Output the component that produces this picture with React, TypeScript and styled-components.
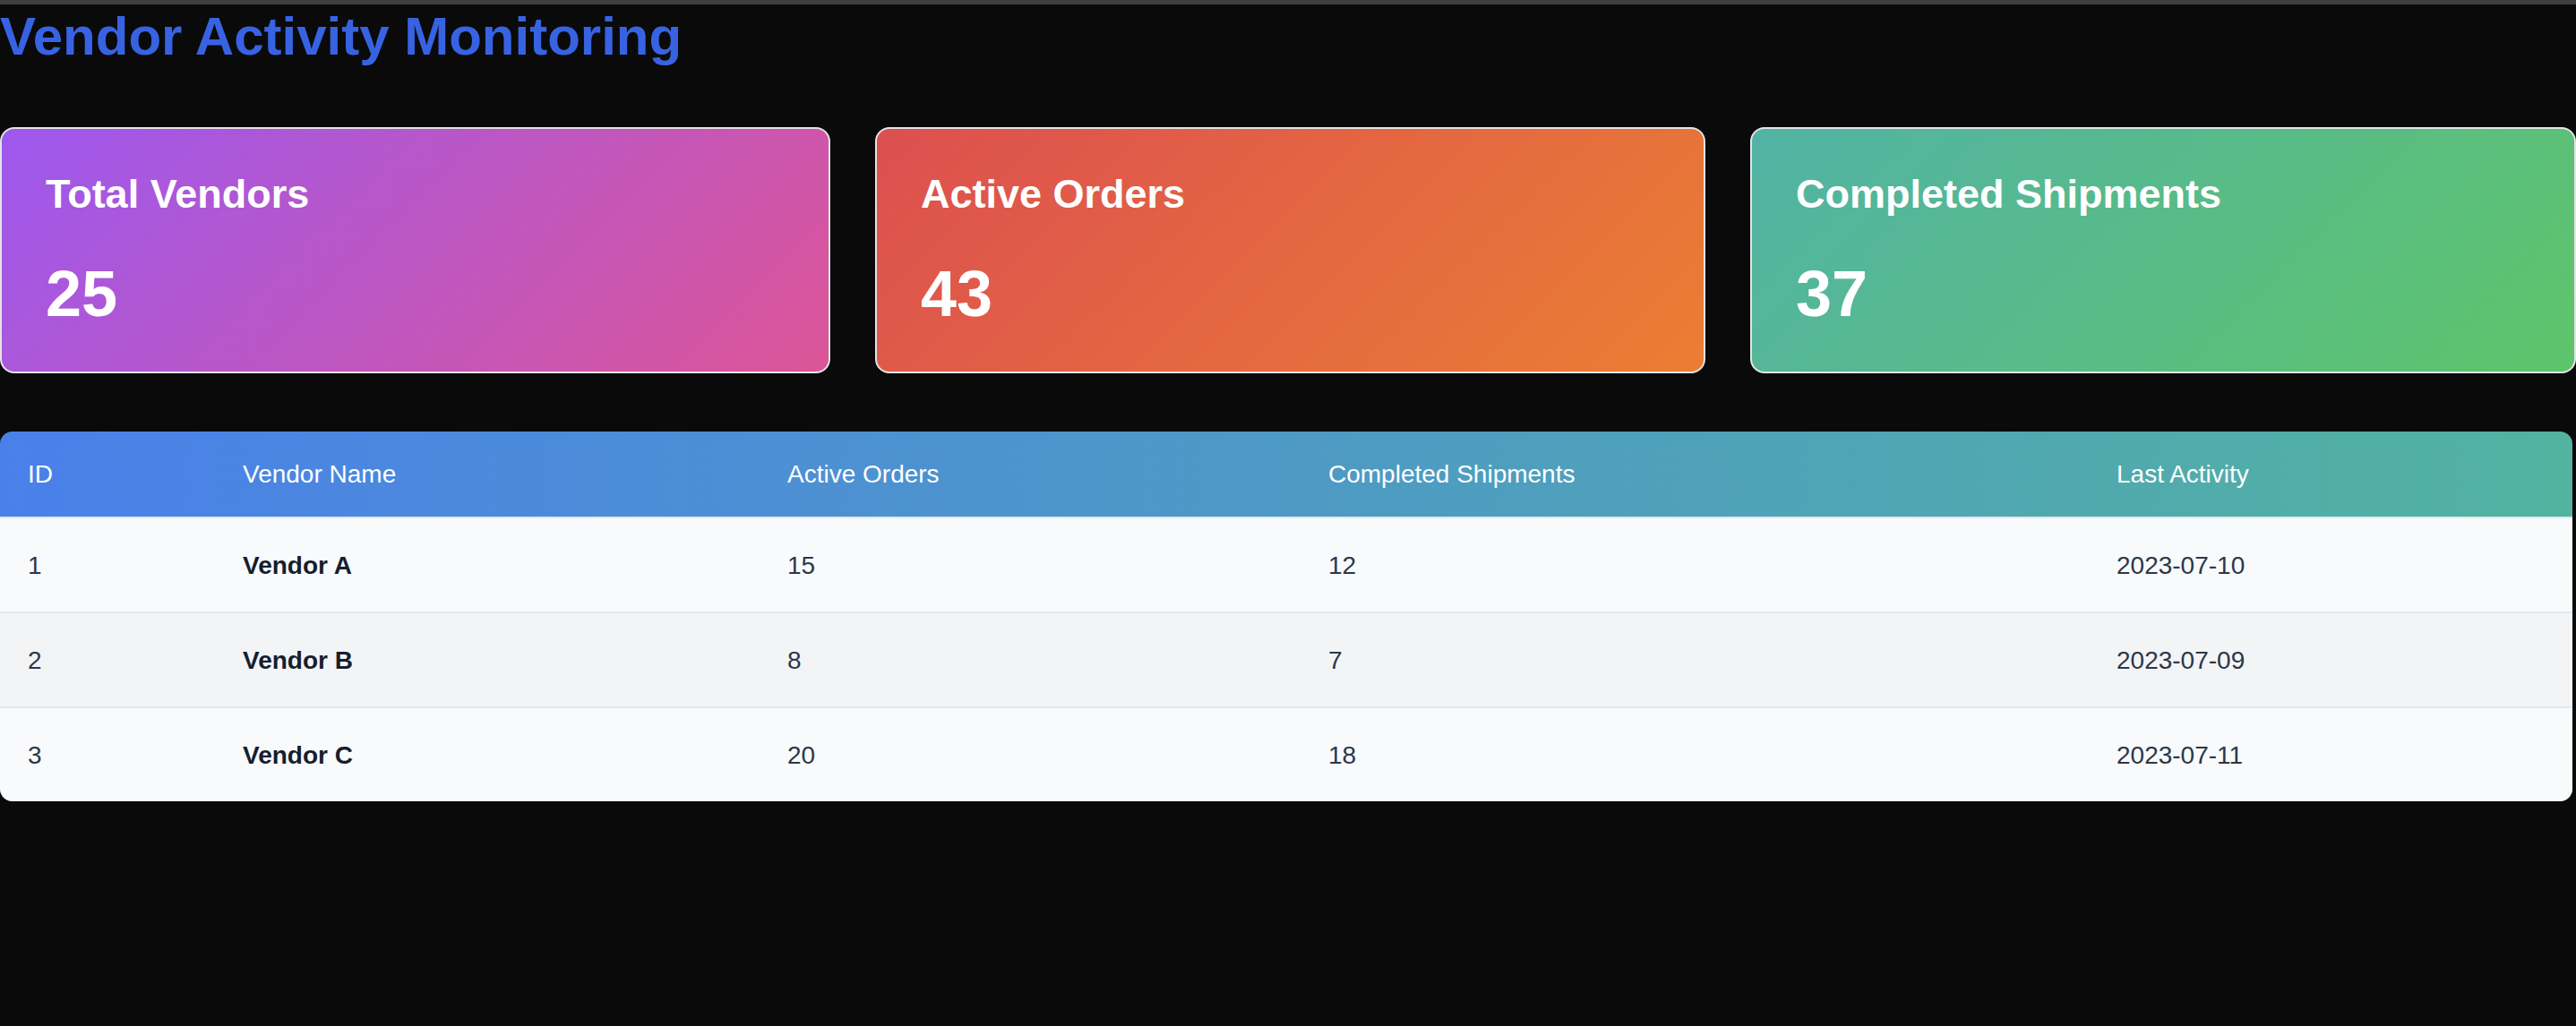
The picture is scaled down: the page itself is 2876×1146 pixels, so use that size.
import React from "react";
import styled, { createGlobalStyle } from "styled-components";

const GlobalStyle = createGlobalStyle`
  html, body {
    margin: 0;
    padding: 0;
    background: #0a0a0a;
    overflow: hidden;
    font-family: "Liberation Sans", Arial, Helvetica, sans-serif;
  }
  * { box-sizing: border-box; }
`;

const TopStrip = styled.div`
  height: 5px;
  background: #3f3f3f;
`;

const Page = styled.main`
  width: 2876px;
  padding: 1px 0 0;
`;

const Title = styled.h1`
  margin: 0 0 67px;
  font-size: 60px;
  line-height: 69px;
  font-weight: 700;
  color: #3763e3;
`;

const CardGrid = styled.section`
  display: grid;
  grid-template-columns: 927px 927px 1fr;
  gap: 50px;
  margin-bottom: 65px;
`;

const Card = styled.div<{ $from: string; $to: string }>`
  border: 2px solid #e4e4e7;
  border-radius: 16px;
  padding: 46px 48px 45px 49px;
  background: linear-gradient(135deg, ${(p) => p.$from}, ${(p) => p.$to});
  color: #ffffff;
`;

const CardTitle = styled.h3`
  margin: 0 0 44px;
  font-size: 45px;
  line-height: 53px;
  font-weight: 700;
`;

const CardValue = styled.div`
  font-size: 72px;
  line-height: 83px;
  font-weight: 700;
`;

const TableWrap = styled.div`
  margin-right: 4px;
  border-radius: 14px;
  overflow: hidden;
  background: linear-gradient(90deg, #4a80ea, #52b3a0);
`;

const Table = styled.table`
  width: 100%;
  table-layout: fixed;
  border-collapse: separate;
  border-spacing: 0;
  font-size: 28px;
`;

const Th = styled.th`
  text-align: left;
  font-weight: 400;
  color: #ffffff;
  padding: 31px 31px;
  line-height: 33px;
  border-bottom: 2px solid #e2e8f0;
  white-space: nowrap;
`;

const Row = styled.tr<{ $alt: boolean; $last: boolean }>`
  background: ${(p) => (p.$alt ? "#f3f4f6" : "#f8fafc")};
  & > td {
    border-bottom: ${(p) => (p.$last ? "none" : "2px solid #e2e8f0")};
  }
`;

const Td = styled.td<{ $strong?: boolean }>`
  padding: 35.5px 31px;
  line-height: 33px;
  color: ${(p) => (p.$strong ? "#161e2e" : "#2d3748")};
  font-weight: ${(p) => (p.$strong ? 700 : 400)};
  white-space: nowrap;
`;

const stats = [
  { title: "Total Vendors", value: 25, from: "#9d58ee", to: "#dc5597" },
  { title: "Active Orders", value: 43, from: "#dc4f50", to: "#eb7e33" },
  { title: "Completed Shipments", value: 37, from: "#52b3a5", to: "#5ec46a" },
];

const vendors = [
  { id: 1, name: "Vendor A", active: 15, completed: 12, last: "2023-07-10" },
  { id: 2, name: "Vendor B", active: 8, completed: 7, last: "2023-07-09" },
  { id: 3, name: "Vendor C", active: 20, completed: 18, last: "2023-07-11" },
];

export default function App() {
  return (
    <>
      <GlobalStyle />
      <TopStrip />
      <Page>
        <Title>Vendor Activity Monitoring</Title>
        <CardGrid>
          {stats.map((s) => (
            <Card key={s.title} $from={s.from} $to={s.to}>
              <CardTitle>{s.title}</CardTitle>
              <CardValue>{s.value}</CardValue>
            </Card>
          ))}
        </CardGrid>
        <TableWrap>
          <Table>
            <colgroup>
              <col style={{ width: 240 }} />
              <col style={{ width: 608 }} />
              <col style={{ width: 604 }} />
              <col style={{ width: 880 }} />
              <col />
            </colgroup>
            <thead>
              <tr>
                <Th>ID</Th>
                <Th>Vendor Name</Th>
                <Th>Active Orders</Th>
                <Th>Completed Shipments</Th>
                <Th>Last Activity</Th>
              </tr>
            </thead>
            <tbody>
              {vendors.map((v, i) => (
                <Row key={v.id} $alt={i % 2 === 1} $last={i === vendors.length - 1}>
                  <Td>{v.id}</Td>
                  <Td $strong>{v.name}</Td>
                  <Td>{v.active}</Td>
                  <Td>{v.completed}</Td>
                  <Td>{v.last}</Td>
                </Row>
              ))}
            </tbody>
          </Table>
        </TableWrap>
      </Page>
    </>
  );
}
